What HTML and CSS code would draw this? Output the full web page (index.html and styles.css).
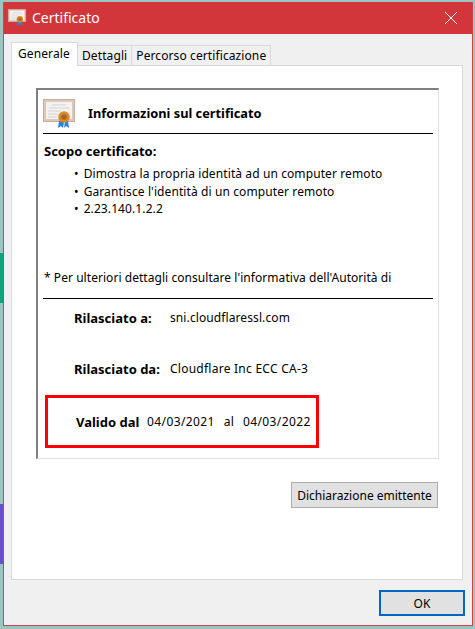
FILE: index.html
```html
<!DOCTYPE html>
<html lang="it">
<head>
    <meta charset="UTF-8">
    <meta name="viewport" content="width=device-width, initial-scale=1.0">
    <title>Certificato</title>
    <link rel="stylesheet" href="styles.css">
</head>
<body>
    <svg class="defs" width="0" height="0">
        <symbol id="cert" viewBox="0 0 32 30">
            <rect x="0.5" y="0.5" width="31" height="22" fill="#dcc8ba" stroke="#c9ae9c" stroke-width="1"/>
            <rect x="3" y="3" width="26" height="17" fill="#f4f2f0"/>
            <path d="M9 6h14M6 9h20M5 12h13M5 15h10M5 18h9" stroke="#d4d4d4" stroke-width="1"/>
            <path d="M16 22l-1 7 3-2 2 2 1-6zM22 22l-1 7 2-2 3 2-1-7z" fill="#2f7fd6"/>
            <circle cx="21" cy="18" r="5.8" fill="#d98a2c"/>
            <circle cx="21" cy="18" r="2.8" fill="#a8651f"/>
        </symbol>
    </svg>

    <div class="window">
        <div class="titlebar">
            <svg class="title-icon"><use href="#cert"/></svg>
            <span class="title-text">Certificato</span>
            <svg class="close-icon" viewBox="0 0 12 12"><path d="M0 0l12 12M12 0L0 12" stroke="#fff" stroke-width="1"/></svg>
        </div>

        <div class="content">
            <div class="tabs">
                <div class="tab active">Generale</div>
                <div class="tab">Dettagli</div>
                <div class="tab">Percorso certificazione</div>
            </div>

            <div class="panel">
                <div class="info-box">
                    <div class="info-header">
                        <svg class="info-icon"><use href="#cert"/></svg>
                        <span class="info-title">Informazioni sul certificato</span>
                    </div>

                    <div class="scope">
                        <p class="scope-title">Scopo certificato:</p>
                        <ul class="scope-list">
                            <li>Dimostra la propria identità ad un computer remoto</li>
                            <li>Garantisce l'identità di un computer remoto</li>
                            <li>2.23.140.1.2.2</li>
                        </ul>
                    </div>

                    <p class="note">* Per ulteriori dettagli consultare l'informativa dell'Autorità di</p>

                    <div class="issued">
                        <div class="issued-row first">
                            <span class="label label-to">Rilasciato a:</span>
                            <span>sni.cloudflaressl.com</span>
                        </div>
                        <div class="issued-row second">
                            <span class="label label-by">Rilasciato da:</span>
                            <span class="issuer-name">Cloudflare Inc ECC CA-3</span>
                        </div>
                    </div>

                    <div class="validity">
                        <span class="label label-from">Valido dal</span>
                        <span class="date">04/03/2021</span>
                        <span class="date-sep">al</span>
                        <span class="date">04/03/2022</span>
                    </div>
                </div>

                <div class="panel-actions">
                    <button type="button" class="btn-issuer">Dichiarazione emittente</button>
                </div>
            </div>

            <div class="footer">
                <button type="button" class="btn-ok">OK</button>
            </div>
        </div>
    </div>
</body>
</html>
```

FILE: styles.css
```css
* {
    box-sizing: border-box;
    margin: 0;
    padding: 0;
}

body {
    width: 475px;
    height: 629px;
    overflow: hidden;
    padding: 2px 2px 0 3px;
    font-family: "Noto Sans", "Liberation Sans", sans-serif;
    font-size: 12px;
    letter-spacing: 0.1px;
    color: #000;
    background-color: #9cc4c2;
    background-image:
        linear-gradient(#10a37f, #10a37f),
        linear-gradient(#6a4fc8, #6a4fc8);
    background-repeat: no-repeat;
    background-size: 3px 50px, 3px 60px;
    background-position: 0 253px, 0 504px;
}

.defs {
    position: absolute;
}

.window {
    width: 470px;
    height: 624px;
    display: flex;
    flex-direction: column;
    border: 1px solid #c9474c;
    border-top: 0;
    background: #f0f0f0;
}

.titlebar {
    height: 32px;
    flex-shrink: 0;
    display: flex;
    align-items: center;
    padding: 0 15px 1px 3px;
    background: #d2363b;
    color: #fff;
}

.title-icon {
    width: 20px;
    height: 17px;
    margin-right: 5px;
}

.title-text {
    font-size: 14px;
    letter-spacing: 0;
    flex: 1;
}

.close-icon {
    width: 12px;
    height: 12px;
}

.content {
    flex: 1;
    padding: 8px 9px 8px 7px;
    display: flex;
    flex-direction: column;
}

.tabs {
    display: flex;
    align-items: flex-end;
    height: 24px;
    position: relative;
    z-index: 1;
    margin-bottom: -1px;
}

.tab {
    height: 21px;
    padding: 0 4px;
    line-height: 20px;
    background: #f0f0f0;
    border: 1px solid #d9d9d9;
    border-left: 0;
}

.tab.active {
    height: 24px;
    width: 67px;
    padding: 1px 0 0 6px;
    background: #fff;
    border-left: 1px solid #d9d9d9;
    border-bottom: 0;
}

.panel {
    height: 515px;
    background: #fff;
    border: 1px solid #d9d9d9;
    padding: 22px 23px 0 24px;
}

.info-box {
    height: 371px;
    border: 1px solid #e0e0e0;
    border-top: 2px solid #808080;
    border-left: 2px solid #808080;
    padding: 0 5px;
}

.info-header {
    height: 44px;
    display: flex;
    align-items: center;
    padding-top: 3px;
    border-bottom: 1px solid #000;
}

.info-icon {
    width: 32px;
    height: 30px;
    margin: 2px 13px 0 0;
}

.info-title {
    font-weight: bold;
    font-size: 12.8px;
    letter-spacing: 0;
}

.scope {
    height: 135px;
    padding-top: 8px;
}

.scope-title {
    font-weight: bold;
    font-size: 13px;
    letter-spacing: 0;
    padding-left: 1px;
    margin-bottom: 5px;
}

.scope-list {
    list-style: none;
    padding-left: 31px;
    line-height: 17.5px;
}

.scope-list li::before {
    content: "•";
    margin-right: 5px;
}

.note {
    height: 30px;
    padding-left: 1px;
    letter-spacing: 0.05px;
    border-bottom: 1px solid #000;
}

.issued-row {
    display: flex;
    padding-left: 31px;
}

.issued-row.first {
    padding-top: 10px;
}

.issued-row.second {
    padding-top: 33px;
}

.issuer-name {
    letter-spacing: 0.25px;
}

.label {
    font-weight: bold;
    font-size: 13px;
    letter-spacing: 0;
}

.label-to {
    width: 96px;
}

.label-by {
    width: 96px;
}

.validity {
    width: 274px;
    height: 53px;
    margin: 17px 0 0 2px;
    border: 3px solid #f00;
    display: flex;
    align-items: center;
    padding-left: 28px;
}

.label-from {
    width: 71px;
}

.date {
    letter-spacing: 0.4px;
}

.date-sep {
    margin: 0 9px;
}

.panel-actions {
    display: flex;
    justify-content: flex-end;
    padding: 23px 1px 0 0;
}

button {
    font-family: inherit;
    font-size: 12px;
    color: #000;
    background: #e1e1e1;
    border: 1px solid #adadad;
}

.btn-issuer {
    width: 147px;
    height: 26px;
    letter-spacing: 0;
}

.footer {
    display: flex;
    justify-content: flex-end;
    padding-top: 10px;
    margin-right: -2px;
}

.btn-ok {
    width: 86px;
    height: 26px;
    border: 2px solid #0067c0;
}
```
